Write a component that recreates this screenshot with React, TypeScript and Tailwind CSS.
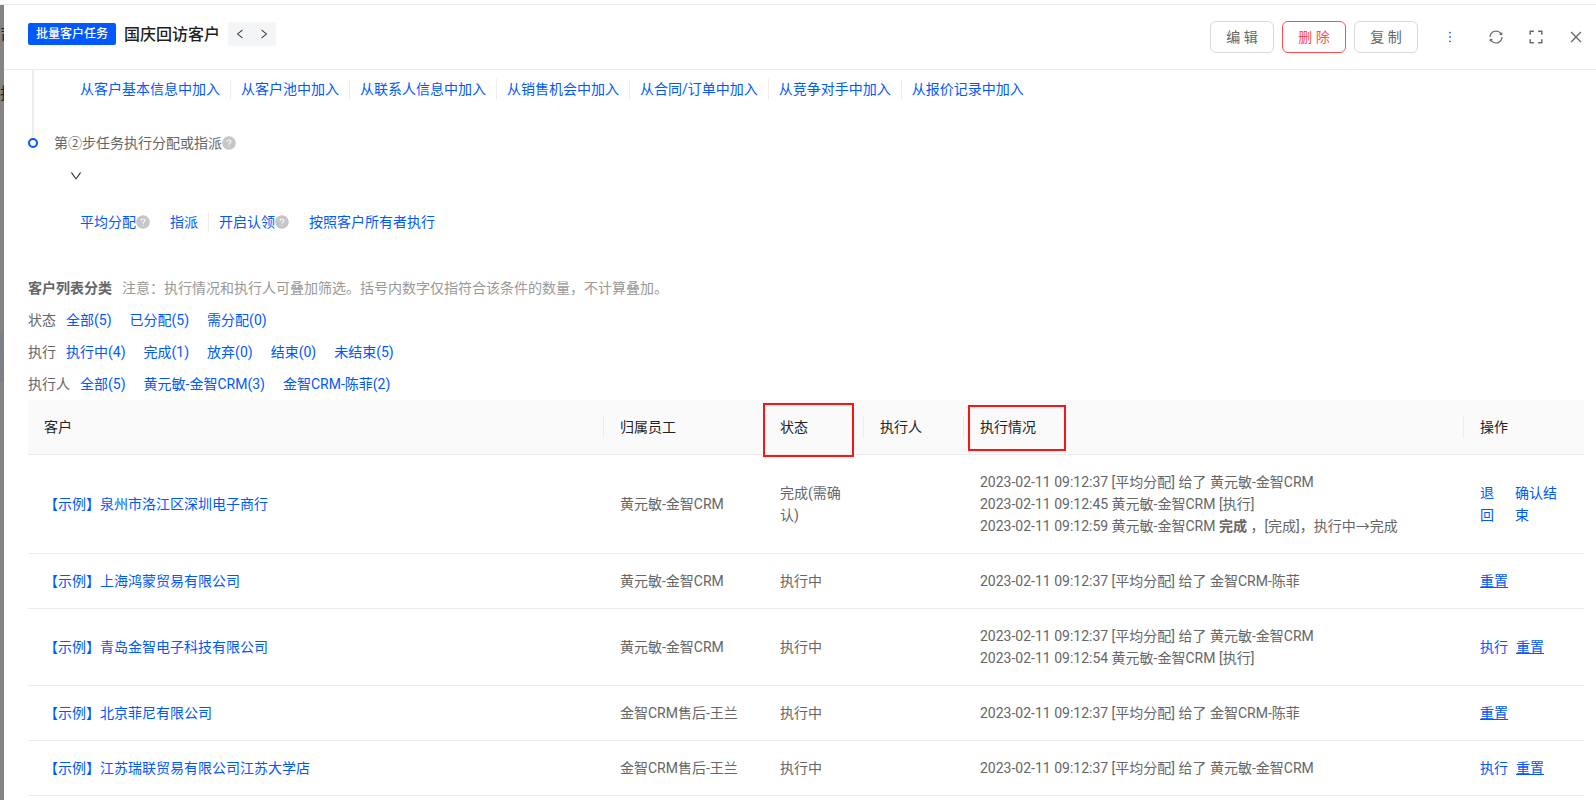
import type { ReactNode } from "react";
import {
  AiFillQuestionCircle,
  AiOutlineClose,
  AiOutlineDown,
  AiOutlineLeft,
  AiOutlineMore,
  AiOutlineRight,
  AiOutlineSync,
} from "react-icons/ai";

interface Action {
  label: string;
  underline?: boolean;
}

interface CustomerRow {
  name: string;
  owner: string;
  status: string;
  logs: ReactNode[];
  actions: Action[];
}

const joinSources = [
  "从客户基本信息中加入",
  "从客户池中加入",
  "从联系人信息中加入",
  "从销售机会中加入",
  "从合同/订单中加入",
  "从竞争对手中加入",
  "从报价记录中加入",
];

const filters = [
  { label: "状态", options: ["全部(5)", "已分配(5)", "需分配(0)"] },
  { label: "执行", options: ["执行中(4)", "完成(1)", "放弃(0)", "结束(0)", "未结束(5)"] },
  { label: "执行人", options: ["全部(5)", "黄元敏-金智CRM(3)", "金智CRM-陈菲(2)"] },
];

const columns = [
  { title: "客户", width: "" },
  { title: "归属员工", width: "w-40" },
  { title: "状态", width: "w-25", mark: "-left-px top-[3px] h-[54px] w-[91px]" },
  { title: "执行人", width: "w-25" },
  { title: "执行情况", width: "w-125", mark: "left-1 top-[5px] h-[46px] w-[98px]" },
  { title: "操作", width: "w-30" },
];

const rows: CustomerRow[] = [
  {
    name: "【示例】泉州市洛江区深圳电子商行",
    owner: "黄元敏-金智CRM",
    status: "完成(需确认)",
    logs: [
      "2023-02-11 09:12:37 [平均分配] 给了 黄元敏-金智CRM",
      "2023-02-11 09:12:45 黄元敏-金智CRM [执行]",
      <>
        2023-02-11 09:12:59 黄元敏-金智CRM <b>完成</b> ，[完成]，执行中→完成
      </>,
    ],
    actions: [{ label: "退回" }, { label: "确认结束" }],
  },
  {
    name: "【示例】上海鸿蒙贸易有限公司",
    owner: "黄元敏-金智CRM",
    status: "执行中",
    logs: ["2023-02-11 09:12:37 [平均分配] 给了 金智CRM-陈菲"],
    actions: [{ label: "重置", underline: true }],
  },
  {
    name: "【示例】青岛金智电子科技有限公司",
    owner: "黄元敏-金智CRM",
    status: "执行中",
    logs: [
      "2023-02-11 09:12:37 [平均分配] 给了 黄元敏-金智CRM",
      "2023-02-11 09:12:54 黄元敏-金智CRM [执行]",
    ],
    actions: [{ label: "执行" }, { label: "重置", underline: true }],
  },
  {
    name: "【示例】北京菲尼有限公司",
    owner: "金智CRM售后-王兰",
    status: "执行中",
    logs: ["2023-02-11 09:12:37 [平均分配] 给了 金智CRM-陈菲"],
    actions: [{ label: "重置", underline: true }],
  },
  {
    name: "【示例】江苏瑞联贸易有限公司江苏大学店",
    owner: "金智CRM售后-王兰",
    status: "执行中",
    logs: ["2023-02-11 09:12:37 [平均分配] 给了 黄元敏-金智CRM"],
    actions: [{ label: "执行" }, { label: "重置", underline: true }],
  },
];

function Link({ children, className = "" }: { children: ReactNode; className?: string }) {
  return (
    <a href="#" className={`text-[#0058fe] ${className}`}>
      {children}
    </a>
  );
}

function Divider() {
  return <span className="mx-2.5 h-5 w-px bg-[#ececec]" />;
}

function Help() {
  return (
    <AiFillQuestionCircle viewBox="48 48 928 928" className="size-3.5 text-[#c4c6c9]" />
  );
}

function FullscreenIcon() {
  return (
    <svg viewBox="0 0 14 14" className="size-3.5" fill="none" stroke="currentColor" strokeWidth="1.4">
      <path d="M1.2 4.8V1.2h3.6M9.2 1.2h3.6v3.6M12.8 9.2v3.6H9.2M4.8 12.8H1.2V9.2" />
    </svg>
  );
}

// the sliver of the dimmed page that stays visible beside the drawer
function Backdrop() {
  return (
    <div className="flex w-1 shrink-0 flex-col overflow-hidden bg-[#868482] text-base leading-4 text-[#222]">
      <span className="mt-[23px] h-4 w-4">司</span>
      <span className="mt-[42px] h-4 w-4">执</span>
      <span className="mt-[231px] h-[49px] w-4 bg-[#7c8086]" />
    </div>
  );
}

function Header() {
  return (
    <header className="flex h-[65px] items-center justify-between border-b border-[#ececec] pl-6 pr-3">
      <div className="flex items-center gap-2 pb-1.5">
        <span className="rounded-xs bg-[#0058fe] px-2 text-xs font-medium leading-[22px] text-white">
          批量客户任务
        </span>
        <h1 className="pt-0.5 text-base font-medium leading-6 text-[#1f1f1f]">国庆回访客户</h1>
        <div className="flex bg-[#f4f5f7] text-[#333]">
          <button aria-label="上一条" className="grid size-6 place-items-center">
            <AiOutlineLeft className="size-3" />
          </button>
          <button aria-label="下一条" className="grid size-6 place-items-center">
            <AiOutlineRight className="size-3" />
          </button>
        </div>
      </div>
      <div className="flex items-center text-[#666]">
        <div className="flex gap-2">
          <button className="h-8 w-16 rounded-md border border-[#d9d9d9]">编 辑</button>
          <button className="h-8 w-16 rounded-md border border-[#ff4d4f] text-[#ff4d4f]">删 除</button>
          <button className="h-8 w-16 rounded-md border border-[#d9d9d9]">复 制</button>
        </div>
        <button aria-label="更多" className="ml-6 text-[#0058fe]">
          <AiOutlineMore className="size-4" />
        </button>
        <div className="ml-[30px] flex gap-6">
          <button aria-label="刷新">
            <AiOutlineSync className="size-4" />
          </button>
          <button aria-label="全屏" className="grid size-4 place-items-center">
            <FullscreenIcon />
          </button>
          <button aria-label="关闭">
            <AiOutlineClose className="size-4" />
          </button>
        </div>
      </div>
    </header>
  );
}

function Steps() {
  return (
    <section>
      <div className="ml-1 flex h-[67px] border-l-2 border-[#ececec] pl-[46px] pt-[9px]">
        <div className="flex h-5 items-center">
          {joinSources.map((source, i) => (
            <div key={source} className="flex items-center">
              {i > 0 && <Divider />}
              <Link>{source}</Link>
            </div>
          ))}
        </div>
      </div>
      <div className="flex h-3 items-center gap-4">
        <span className="size-2.5 rounded-full border-[2.5px] border-[#0058fe]" />
        <h2 className="flex items-center">
          第②步任务执行分配或指派
          <Help />
        </h2>
      </div>
      <button aria-label="收起" className="ml-[41px] mt-5 block text-[#333]">
        <AiOutlineDown className="size-3.5" />
      </button>
      <div className="ml-13 mt-[29px] flex h-5 items-center">
        <Link>平均分配</Link>
        <Help />
        <Link className="ml-5">指派</Link>
        <Divider />
        <Link>开启认领</Link>
        <Help />
        <Link className="ml-5">按照客户所有者执行</Link>
      </div>
    </section>
  );
}

function Filters() {
  return (
    <section className="mt-10 leading-8">
      <div className="flex gap-2.5">
        <b>客户列表分类</b>
        <span className="text-[#999]">
          注意：执行情况和执行人可叠加筛选。括号内数字仅指符合该条件的数量，不计算叠加。
        </span>
      </div>
      {filters.map((filter) => (
        <div key={filter.label} className="flex gap-2.5">
          <span>{filter.label}</span>
          <div className="flex gap-[18px]">
            {filter.options.map((option) => (
              <Link key={option}>{option}</Link>
            ))}
          </div>
        </div>
      ))}
    </section>
  );
}

function CustomerTable() {
  return (
    <table className="w-full table-fixed border-separate border-spacing-0 text-left">
      <thead>
        <tr>
          {columns.map((col, i) => (
            <th
              key={col.title}
              className={`relative border-b border-[#ececec] bg-[#fafafa] py-4 font-normal text-[#222] ${col.width}`}
            >
              <div className={`px-4 ${i < columns.length - 1 ? "border-r border-[#ececec]" : ""}`}>
                {col.title}
              </div>
              {col.mark && (
                <span className={`absolute z-10 border-2 border-[#fb1414] ${col.mark}`} />
              )}
            </th>
          ))}
        </tr>
      </thead>
      <tbody>
        {rows.map((row) => (
          <tr key={row.name} className="[&>td]:border-b [&>td]:border-[#ececec] [&>td]:p-4">
            <td>
              <Link>{row.name}</Link>
            </td>
            <td>{row.owner}</td>
            <td>{row.status}</td>
            <td />
            <td>
              {row.logs.map((log, i) => (
                <div key={i}>{log}</div>
              ))}
            </td>
            <td>
              <div className={row.logs.length > 2 ? "grid grid-cols-[15px_42px] gap-5" : "flex gap-2"}>
                {row.actions.map((action) => (
                  <Link key={action.label} className={action.underline ? "underline" : ""}>
                    {action.label}
                  </Link>
                ))}
              </div>
            </td>
          </tr>
        ))}
      </tbody>
    </table>
  );
}

export default function App() {
  return (
    <div className="flex h-screen flex-col overflow-hidden bg-white pt-1 font-['Roboto','Noto_Sans_CJK_SC',sans-serif] text-sm leading-[22px] text-[#666]">
      <div className="flex min-h-0 flex-1 border-t border-[#ececec]">
        <Backdrop />
        <main className="min-w-0 flex-1">
          <Header />
          <div className="pl-6 pr-3">
            <Steps />
            <Filters />
            <CustomerTable />
          </div>
        </main>
      </div>
    </div>
  );
}
